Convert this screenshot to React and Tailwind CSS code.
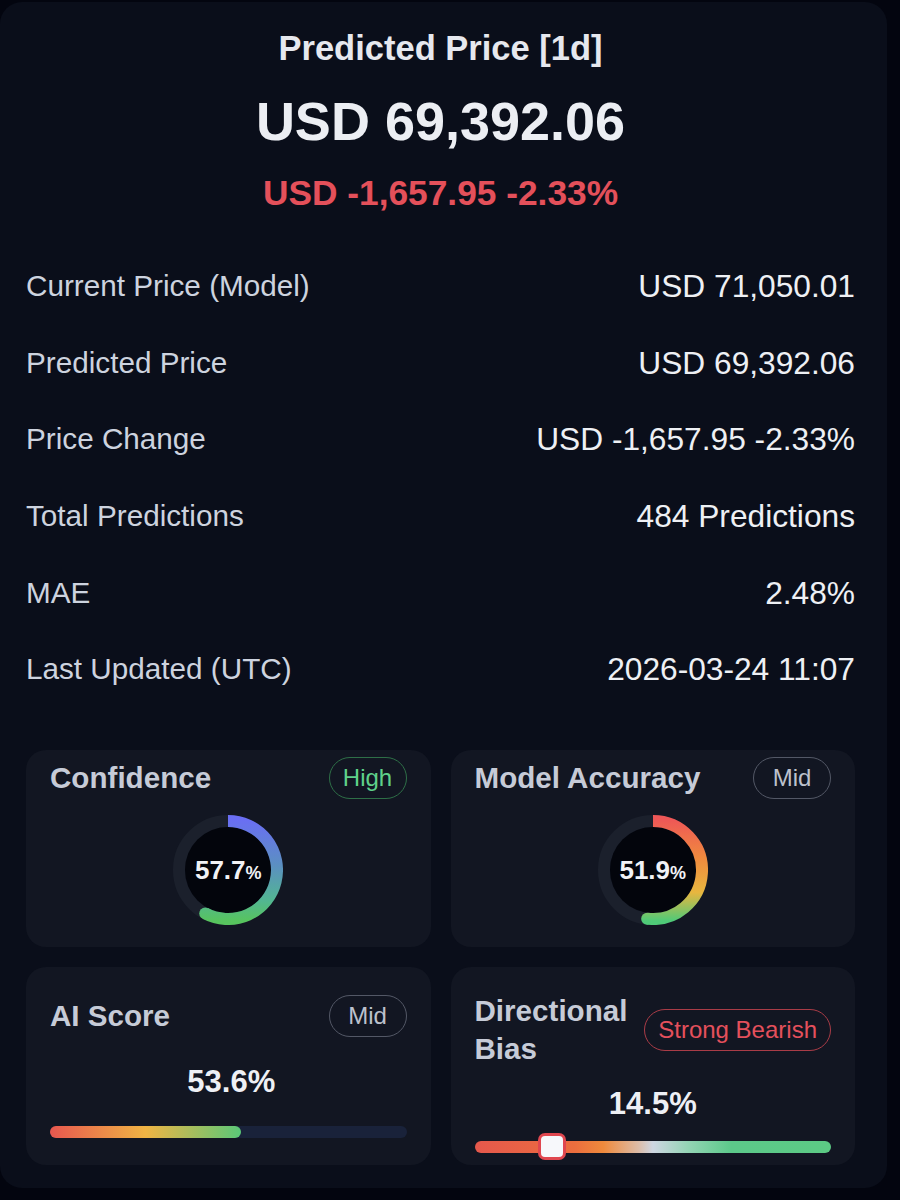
import React from "react";

function Badge({ children, tone }) {
  const tones = {
    green: "border-[#2e6f47] text-[#5fd18a]",
    gray: "border-[#535866] text-[#bcc1cc]",
    red: "border-[#a93c47] text-[#e4505c]",
  };
  return (
    <span
      className={
        "inline-flex h-[42px] min-w-[78px] shrink-0 items-center justify-center rounded-full border-[1.5px] px-[13px] text-[24px] leading-none " +
        tones[tone]
      }
    >
      {children}
    </span>
  );
}

function Donut({ pct, id, stops }) {
  const r = 49;
  const c = 55;
  const a = (pct / 100) * 2 * Math.PI;
  const ex = c + r * Math.sin(a);
  const ey = c - r * Math.cos(a);
  const large = pct > 50 ? 1 : 0;
  const d = `M ${c} ${c - r} A ${r} ${r} 0 ${large} 1 ${ex} ${ey}`;
  return (
    <div className="relative mx-auto h-[110px] w-[110px]">
      <svg width="110" height="110" viewBox="0 0 110 110">
        <defs>
          <linearGradient id={id} gradientUnits="userSpaceOnUse" x1="0" y1="4" x2="0" y2="106">
            {stops.map(([o, col]) => (
              <stop key={o} offset={o} stopColor={col} />
            ))}
          </linearGradient>
        </defs>
        <circle cx={c} cy={c} r={r} fill="none" stroke="#1b202c" strokeWidth="12" />
        <circle cx={c} cy={c} r="43" fill="#03050c" />
        <path d={d} fill="none" stroke={`url(#${id})`} strokeWidth="12" />
        <circle cx={ex} cy={ey} r="6" fill={`url(#${id})`} />
      </svg>
      <div className="absolute inset-0 flex items-center justify-center">
        <span className="text-[26px] font-bold leading-none text-[#f1f2f6]">
          {pct}
          <span className="text-[18px]">%</span>
        </span>
      </div>
    </div>
  );
}

const rows = [
  ["Current Price (Model)", "USD 71,050.01"],
  ["Predicted Price", "USD 69,392.06"],
  ["Price Change", "USD -1,657.95 -2.33%"],
  ["Total Predictions", "484 Predictions"],
  ["MAE", "2.48%"],
  ["Last Updated (UTC)", "2026-03-24 11:07"],
];

export default function App() {
  return (
    <div className="min-h-[1200px] bg-[#03050f] pt-[2px] font-['Liberation_Sans',Arial,sans-serif]">
      <div className="h-[1186px] w-[887px] rounded-[22px] bg-[#0a0e1a] pl-[26px] pr-[32px] pt-[26px]">
        <h2 className="text-center text-[34.5px] font-bold leading-[40px] text-[#e6e8ee]">
          Predicted Price [1d]
        </h2>
        <div className="mt-[23px] text-center text-[54px] font-bold leading-[60px] text-[#eceef3]">
          USD 69,392.06
        </div>
        <div className="mt-[22px] text-center text-[35.3px] font-bold leading-[40px] text-[#e4505a]">
          USD -1,657.95 -2.33%
        </div>

        <div className="mt-[35px] flex flex-col">
          {rows.map(([k, v]) => (
            <div key={k} className="flex h-[76.6px] items-center justify-between">
              <span className="text-[29.7px] leading-[36px] text-[#cdd3df]">{k}</span>
              <span className="text-[31.7px] leading-[36px] text-[#eef0f4]">{v}</span>
            </div>
          ))}
        </div>

        <div className="mt-[42px] grid grid-cols-2 gap-x-[20px] gap-y-[20px]">
          {/* Confidence */}
          <div className="rounded-[20px] bg-[#121622] px-6 pb-[22px] pt-[7px]">
            <div className="flex h-[42px] items-center justify-between">
              <span className="text-[29.6px] font-bold leading-[38px] text-[#c6cbd7]">Confidence</span>
              <Badge tone="green">High</Badge>
            </div>
            <div className="mt-[16px]">
              <Donut
                pct={57.7}
                id="gConf"
                stops={[
                  ["0", "#6a6ef4"],
                  ["0.45", "#5b8fc2"],
                  ["0.8", "#52b692"],
                  ["1", "#57c45e"],
                ]}
              />
            </div>
          </div>

          {/* Model Accuracy */}
          <div className="rounded-[20px] bg-[#121622] px-6 pb-[22px] pt-[7px]">
            <div className="flex h-[42px] items-center justify-between">
              <span className="text-[29.6px] font-bold leading-[38px] text-[#c6cbd7]">Model Accuracy</span>
              <Badge tone="gray">Mid</Badge>
            </div>
            <div className="mt-[16px]">
              <Donut
                pct={51.9}
                id="gAcc"
                stops={[
                  ["0", "#ee5757"],
                  ["0.38", "#f08a3e"],
                  ["0.72", "#e8b63f"],
                  ["1", "#4fca78"],
                ]}
              />
            </div>
          </div>

          {/* AI Score */}
          <div className="rounded-[20px] bg-[#121622] px-6 pb-[27px] pt-[28px]">
            <div className="flex h-[42px] items-center justify-between">
              <span className="text-[29.6px] font-bold leading-[38px] text-[#c6cbd7]">AI Score</span>
              <Badge tone="gray">Mid</Badge>
            </div>
            <div className="mt-[25px] pl-[6px] text-center text-[31px] font-bold leading-[40px] text-[#eef0f5]">
              53.6%
            </div>
            <div className="mt-[24px] h-[12px] w-full rounded-full bg-[#19223a]">
              <div
                className="h-full rounded-full bg-[linear-gradient(to_right,#e8574f,#f0b444_50%,#5ac878)]"
                style={{ width: "53.6%" }}
              />
            </div>
          </div>

          {/* Directional Bias */}
          <div className="rounded-[20px] bg-[#121622] px-6 pb-[12px] pt-[25px]">
            <div className="flex items-center justify-between gap-4">
              <span className="text-[29.6px] font-bold leading-[38px] text-[#c6cbd7]">
                Directional
                <br />
                Bias
              </span>
              <Badge tone="red">Strong Bearish</Badge>
            </div>
            <div className="mt-[16px] text-center text-[31px] font-bold leading-[40px] text-[#eef0f5]">
              14.5%
            </div>
            <div className="relative mt-[17px] h-[12px] w-full rounded-full bg-[linear-gradient(to_right,#e5584c,#ec6e3e_28%,#ef8a3c_36%,#dcbca8_46%,#ced6e2_50%,#93d4b4_60%,#5cc98a_72%,#5cca84)]">
              <div className="absolute left-[63px] top-[-8px] h-[27px] w-[28px] rounded-[7px] border-[3px] border-[#e0474f] bg-[#f7f8fb]" />
            </div>
          </div>
        </div>
      </div>
    </div>
  );
}
